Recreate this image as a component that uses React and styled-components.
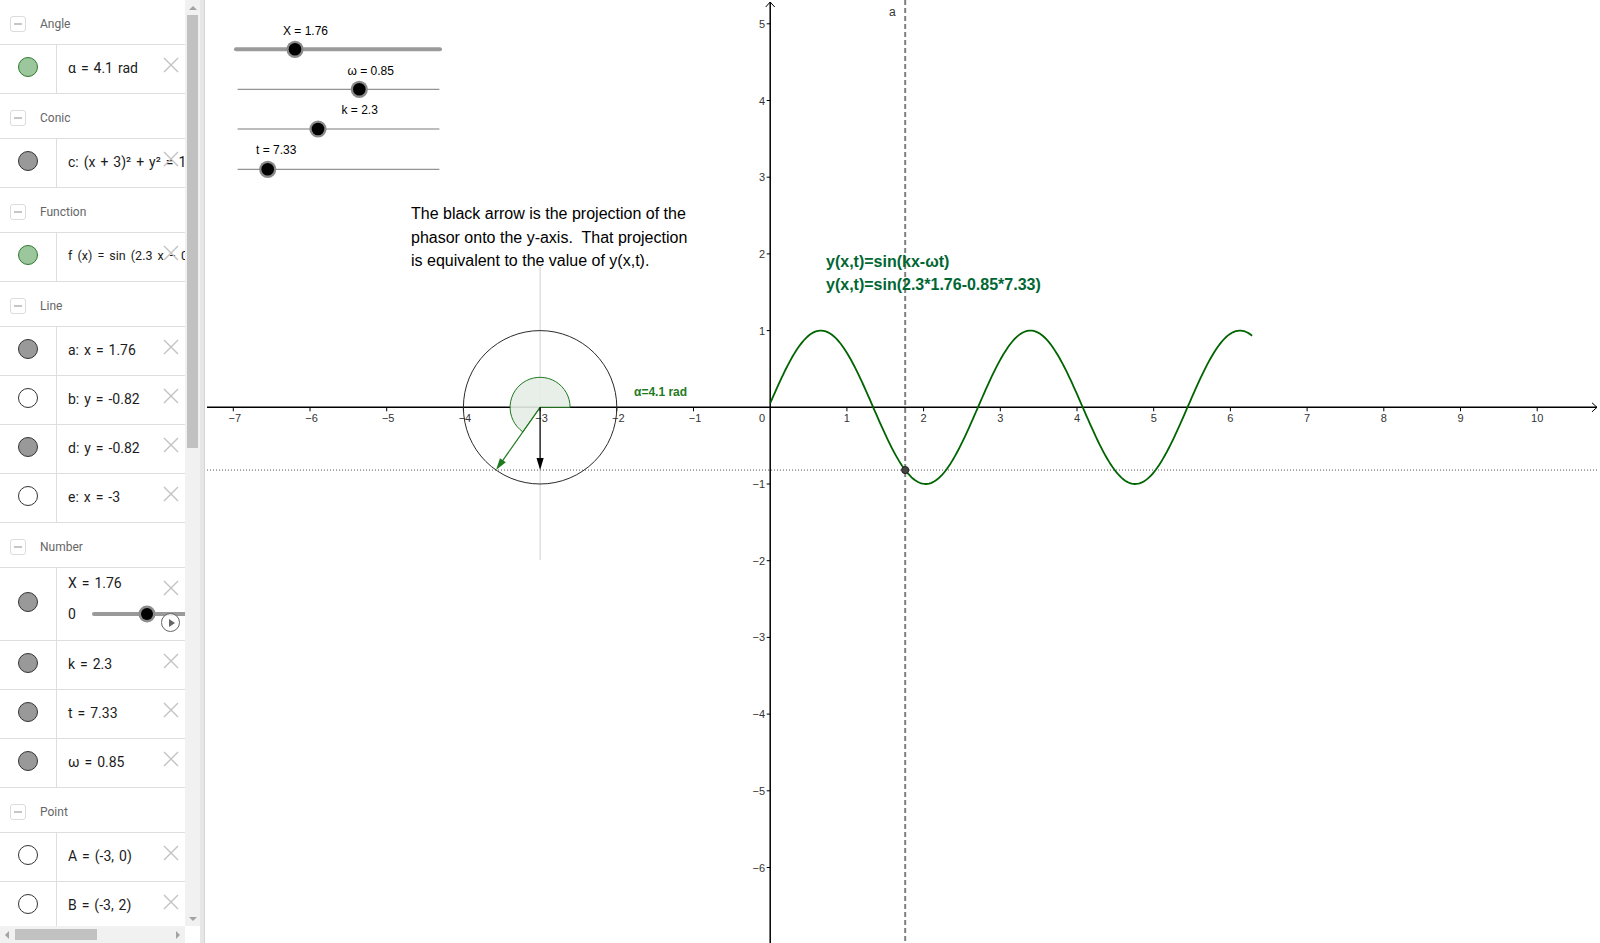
import React from 'react';
import styled, { createGlobalStyle } from 'styled-components';

const GlobalStyle = createGlobalStyle`
  * { box-sizing: border-box; }
  html, body { margin: 0; padding: 0; background: #fff; }
  body { font-family: Roboto, "Liberation Sans", sans-serif; overflow: hidden; }
`;

const Page = styled.div`
  display: flex;
  width: 1600px;
  height: 943px;
  overflow: hidden;
`;

const Sidebar = styled.div`
  width: 200px;
  flex-shrink: 0;
  display: flex;
  flex-direction: column;
`;

const ScrollRow = styled.div`
  display: flex;
  height: 926px;
`;

const List = styled.div`
  width: 185px;
  overflow: hidden;
`;

const VScroll = styled.div`
  width: 15px;
  background: #f1f1f1;
  display: flex;
  flex-direction: column;
  align-items: center;
`;

const ArrowCell = styled.div`
  width: ${p => (p.$h ? '100%' : '14px')};
  height: ${p => (p.$h ? '15px' : '100%')};
  display: flex;
  align-items: center;
  justify-content: center;
  flex-shrink: 0;
`;

const Tri = styled.div`
  width: 0;
  height: 0;
  border: 4px solid transparent;
  ${p => p.$dir === 'up' && 'border-bottom-color: #a3a3a3; border-top-width: 0;'}
  ${p => p.$dir === 'down' && 'border-top-color: #a3a3a3; border-bottom-width: 0;'}
  ${p => p.$dir === 'left' && 'border-right-color: #a3a3a3; border-left-width: 0;'}
  ${p => p.$dir === 'right' && 'border-left-color: #a3a3a3; border-right-width: 0;'}
`;

const VThumb = styled.div`
  width: 11px;
  height: 433px;
  background: #c1c1c1;
  flex-shrink: 0;
`;

const Spacer = styled.div`
  flex: 1;
`;

const HScrollRow = styled.div`
  display: flex;
  height: 17px;
`;

const HScroll = styled.div`
  width: 185px;
  background: #f1f1f1;
  display: flex;
  align-items: center;
`;

const HThumb = styled.div`
  width: 82px;
  height: 11px;
  margin-left: 1px;
  background: #c1c1c1;
`;

const Corner = styled.div`
  width: 15px;
  background: #fff;
`;

const Splitter = styled.div`
  width: 5px;
  flex-shrink: 0;
  background: #e6e6e6;
  border-right: 1px solid #d4d4d4;
`;

const GroupHeader = styled.div`
  height: 45px;
  border-bottom: 1px solid #dedede;
  display: flex;
  align-items: center;
  padding: 3px 0 0 10px;
`;

const Toggle = styled.div`
  width: 16px;
  height: 16px;
  border: 1px solid #dcdcdc;
  border-radius: 3px;
  display: flex;
  align-items: center;
  justify-content: center;
`;

const Minus = styled.div`
  width: 8px;
  height: 2px;
  background: #c6c6c6;
`;

const GroupTitle = styled.span`
  margin-left: 14px;
  font-size: 12px;
  color: #666;
`;

const ItemRow = styled.div`
  display: flex;
  height: ${p => (p.$tall ? 73 : 49)}px;
  border-bottom: 1px solid #dedede;
`;

const MarbleCell = styled.div`
  width: 57px;
  flex-shrink: 0;
  border-right: 1px solid #dedede;
  display: flex;
  align-items: center;
  justify-content: center;
  padding-bottom: ${p => (p.$tall ? 5 : 4)}px;
`;

const marbleColors = {
  green: ['#9cc69c', '#2f7a2f'],
  grey: ['#999999', '#333333'],
  white: ['#ffffff', '#333333'],
};

const Marble = styled.div`
  width: 20px;
  height: 20px;
  border-radius: 50%;
  background: ${p => marbleColors[p.$kind][0]};
  border: 1px solid ${p => marbleColors[p.$kind][1]};
`;

const Content = styled.div`
  flex: 1;
  position: relative;
  overflow: hidden;
  white-space: nowrap;
  display: flex;
  flex-direction: ${p => (p.$tall ? 'column' : 'row')};
  align-items: ${p => (p.$tall ? 'stretch' : 'center')};
  padding: ${p => (p.$tall ? '4px 0 0 11px' : '0 0 3px 11px')};
`;

const Formula = styled.span`
  font-size: ${p => p.$size || 14}px;
  line-height: 22px;
  color: #1c1c1c;
  word-spacing: ${p => (p.$spacing == null ? 1.5 : p.$spacing)}px;
`;

const SliderLine = styled.div`
  margin-top: 6px;
  height: 27px;
  display: flex;
  align-items: center;
`;

const Track = styled.div`
  flex: 1;
  height: 4px;
  margin-left: 16px;
  background: #9a9a9a;
  border-radius: 2px 0 0 2px;
  position: relative;
`;

const Knob = styled.div`
  position: absolute;
  left: ${p => p.$at - 6}px;
  top: 50%;
  width: 12px;
  height: 12px;
  margin-top: -6px;
  border-radius: 50%;
  background: #000;
  box-shadow: 0 0 0 2.5px #8c8c8c;
`;

const PlayButton = styled.div`
  position: absolute;
  right: 5px;
  bottom: 8px;
  width: 19px;
  height: 19px;
  border-radius: 50%;
  border: 1.5px solid #666;
  background: rgba(255, 255, 255, 0.85);
  display: flex;
  align-items: center;
  justify-content: center;
`;

const PlayTri = styled.div`
  width: 0;
  height: 0;
  margin-left: 2px;
  border-top: 4px solid transparent;
  border-bottom: 4px solid transparent;
  border-left: 6px solid #666;
`;

const DeleteBox = styled.div`
  position: absolute;
  right: 6px;
  top: 12px;
  width: 16px;
  height: 16px;
`;

const Graphics = styled.div`
  flex: 1;
  background: #fff;
`;

const Canvas = styled.svg`
  display: block;
`;

const AxisLabel = styled.text`
  font: 11px "Liberation Sans", Arial, sans-serif;
  fill: #333;
`;

const SliderLabel = styled.text`
  font: 12px "Liberation Sans", Arial, sans-serif;
  fill: #000;
`;

const Note = styled.text`
  font: 16px "Liberation Sans", Arial, sans-serif;
  fill: #000;
  white-space: pre;
`;

const GreenText = styled.text`
  font: bold ${p => p.$size || 16}px "Liberation Sans", Arial, sans-serif;
  fill: ${p => p.$color || '#006633'};
`;

function DeleteIcon() {
  return (
    <DeleteBox>
      <svg width="16" height="16" viewBox="0 0 16 16">
        <path d="M1 1 L15 15 M15 1 L1 15" stroke="#c2c2c2" strokeWidth="1.4" fill="none" />
      </svg>
    </DeleteBox>
  );
}

function Group({ title }) {
  return (
    <GroupHeader>
      <Toggle>
        <Minus />
      </Toggle>
      <GroupTitle>{title}</GroupTitle>
    </GroupHeader>
  );
}

function Item({ kind, children, size, spacing }) {
  return (
    <ItemRow>
      <MarbleCell>
        <Marble $kind={kind} />
      </MarbleCell>
      <Content>
        <Formula $size={size} $spacing={spacing}>{children}</Formula>
        <DeleteIcon />
      </Content>
    </ItemRow>
  );
}

function SliderItem() {
  return (
    <ItemRow $tall>
      <MarbleCell $tall>
        <Marble $kind="grey" />
      </MarbleCell>
      <Content $tall>
        <Formula>X = 1.76</Formula>
        <SliderLine>
          <Formula>0</Formula>
          <Track>
            <Knob $at={55} />
          </Track>
        </SliderLine>
        <DeleteIcon />
        <PlayButton>
          <PlayTri />
        </PlayButton>
      </Content>
    </ItemRow>
  );
}

const X0 = 770.2;
const Y0 = 407.3;
const U = 76.7;
const sx = x => X0 + x * U;
const sy = y => Y0 - y * U;

const wave = Array.from({ length: 301 }, (_, i) => {
  const x = (i / 300) * 2 * Math.PI;
  const y = Math.sin(2.3 * x - 0.85 * 7.33);
  return `${i ? 'L' : 'M'}${sx(x).toFixed(2)},${sy(y).toFixed(2)}`;
}).join(' ');

const ALPHA = 4.1;
const cx = sx(-3);
const projY = sy(Math.sin(ALPHA));
const tipX = cx + U * Math.cos(ALPHA);
const tipY = Y0 - U * Math.sin(ALPHA);
const sr = 30;
const sector = `M${cx},${Y0} L${cx + sr},${Y0} A${sr} ${sr} 0 1 0 ${cx + sr * Math.cos(ALPHA)},${Y0 - sr * Math.sin(ALPHA)} Z`;

function arrowHead(tx, ty, dx, dy, len = 12, half = 3.6) {
  const bx = tx - dx * len;
  const by = ty - dy * len;
  const px = -dy * half;
  const py = dx * half;
  return `${tx},${ty} ${bx + px},${by + py} ${bx - px},${by - py}`;
}

const gdx = Math.cos(ALPHA);
const gdy = -Math.sin(ALPHA);

const sliders = [
  { x1: 236, x2: 440, y: 49.3, knob: 295, label: 'X = 1.76', lx: 283, ly: 34.5, thick: true },
  { x1: 238, x2: 439, y: 89.3, knob: 359.3, label: 'ω = 0.85', lx: 347.5, ly: 74.5 },
  { x1: 238, x2: 439, y: 129, knob: 318, label: 'k = 2.3', lx: 341.5, ly: 113.5 },
  { x1: 238, x2: 439, y: 169.3, knob: 267.7, label: 't = 7.33', lx: 256, ly: 154 },
];

function CanvasSlider({ x1, x2, y, knob, label, lx, ly, thick }) {
  return (
    <g>
      <line x1={x1} y1={y} x2={x2} y2={y} stroke={thick ? '#9a9a9a' : '#7a7a7a'} strokeWidth={thick ? 4 : 1} strokeLinecap="round" />
      <circle cx={knob} cy={y} r="8.6" fill="#8a8a8a" />
      <circle cx={knob} cy={y} r="6.3" fill="#000" />
      <SliderLabel x={lx} y={ly}>{label}</SliderLabel>
    </g>
  );
}

const xTicks = [-7, -6, -5, -4, -3, -2, -1, 1, 2, 3, 4, 5, 6, 7, 8, 9, 10];
const yTicks = [5, 4, 3, 2, 1, -1, -2, -3, -4, -5, -6];
const fmt = n => (n < 0 ? `\u2212${-n}` : `${n}`);

function Plot() {
  return (
    <Canvas width="1395" height="943" viewBox="205 0 1395 943">
      <line x1={cx} y1="267" x2={cx} y2="560" stroke="#cfcfcf" strokeWidth="1" />

      <line x1="207" y1={projY} x2="1598" y2={projY} stroke="#555" strokeWidth="1" strokeDasharray="1 2" />

      <line x1="207" y1={Y0} x2="1597" y2={Y0} stroke="#000" strokeWidth="1.5" />
      <polyline points={`1592,${Y0 - 4.5} 1597,${Y0} 1592,${Y0 + 4.5}`} fill="none" stroke="#000" strokeWidth="1" />
      <line x1={X0} y1="2" x2={X0} y2="943" stroke="#000" strokeWidth="1.5" />
      <polyline points={`${X0 - 4.5},7 ${X0},2 ${X0 + 4.5},7`} fill="none" stroke="#000" strokeWidth="1" />

      {xTicks.map(n => (
        <g key={`x${n}`}>
          <line x1={sx(n)} y1={Y0} x2={sx(n)} y2={Y0 + 4} stroke="#000" strokeWidth="1" />
          <AxisLabel x={sx(n) + (n < 0 ? 1.5 : 0)} y={Y0 + 14.5} textAnchor="middle">{fmt(n)}</AxisLabel>
        </g>
      ))}
      <AxisLabel x="765" y={Y0 + 14.5} textAnchor="end">0</AxisLabel>
      {yTicks.map(n => (
        <g key={`y${n}`}>
          <line x1={X0 - 3.5} y1={sy(n)} x2={X0} y2={sy(n)} stroke="#000" strokeWidth="1" />
          <AxisLabel x="765" y={sy(n) + 4} textAnchor="end">{fmt(n)}</AxisLabel>
        </g>
      ))}

      <line x1={sx(1.76)} y1="0" x2={sx(1.76)} y2="943" stroke="#808080" strokeWidth="2" strokeDasharray="5 3" />
      <AxisLabel x="889" y="15.5" style={{ fontSize: 12 }}>a</AxisLabel>

      <circle cx={cx} cy={Y0} r={U} fill="none" stroke="#2a2a2a" strokeWidth="1" />
      <path d={sector} fill="#e6ede6" fillOpacity="0.9" stroke="#1f7a1f" strokeWidth="1" />
      <line x1={cx} y1={Y0} x2={tipX - gdx * 11} y2={tipY - gdy * 11} stroke="#1f7a1f" strokeWidth="1.2" />
      <polygon points={arrowHead(tipX, tipY, gdx, gdy)} fill="#1f7a1f" />
      <line x1={cx} y1={Y0} x2={cx} y2={projY - 11} stroke="#000" strokeWidth="1.2" />
      <polygon points={arrowHead(cx, projY, 0, 1)} fill="#000" />
      <GreenText x="634" y="396" $size={12} $color="#1f7a1f">α=4.1 rad</GreenText>

      <path d={wave} fill="none" stroke="#006400" strokeWidth="1.8" />
      <circle cx={sx(1.76)} cy={projY} r="3.6" fill="#444" stroke="#222" strokeWidth="1" />

      {sliders.map(s => (
        <CanvasSlider key={s.label} {...s} />
      ))}

      <Note x="411" y="219">The black arrow is the projection of the</Note>
      <Note x="411" y="242.5">{'phasor onto the y-axis.  That projection'}</Note>
      <Note x="411" y="266">is equivalent to the value of y(x,t).</Note>

      <GreenText x="826" y="267">y(x,t)=sin(kx-ωt)</GreenText>
      <GreenText x="826" y="290">y(x,t)=sin(2.3*1.76-0.85*7.33)</GreenText>
    </Canvas>
  );
}

export default function App() {
  return (
    <>
      <GlobalStyle />
      <Page>
        <Sidebar>
          <ScrollRow>
            <List>
              <Group title="Angle" />
              <Item kind="green">α = 4.1 rad</Item>
              <Group title="Conic" />
              <Item kind="grey">c: (x + 3)² + y² = 1</Item>
              <Group title="Function" />
              <Item kind="green" size={12.5} spacing={2}>f (x) = sin (2.3 x − 0.85 · 7.33)</Item>
              <Group title="Line" />
              <Item kind="grey">a: x = 1.76</Item>
              <Item kind="white">b: y = -0.82</Item>
              <Item kind="grey">d: y = -0.82</Item>
              <Item kind="white">e: x = -3</Item>
              <Group title="Number" />
              <SliderItem />
              <Item kind="grey">k = 2.3</Item>
              <Item kind="grey">t = 7.33</Item>
              <Item kind="grey">ω = 0.85</Item>
              <Group title="Point" />
              <Item kind="white">A = (-3, 0)</Item>
              <Item kind="white">B = (-3, 2)</Item>
            </List>
            <VScroll>
              <ArrowCell $h>
                <Tri $dir="up" />
              </ArrowCell>
              <VThumb />
              <Spacer />
              <ArrowCell $h>
                <Tri $dir="down" />
              </ArrowCell>
            </VScroll>
          </ScrollRow>
          <HScrollRow>
            <HScroll>
              <ArrowCell>
                <Tri $dir="left" />
              </ArrowCell>
              <HThumb />
              <Spacer />
              <ArrowCell>
                <Tri $dir="right" />
              </ArrowCell>
            </HScroll>
            <Corner />
          </HScrollRow>
        </Sidebar>
        <Splitter />
        <Graphics>
          <Plot />
        </Graphics>
      </Page>
    </>
  );
}
